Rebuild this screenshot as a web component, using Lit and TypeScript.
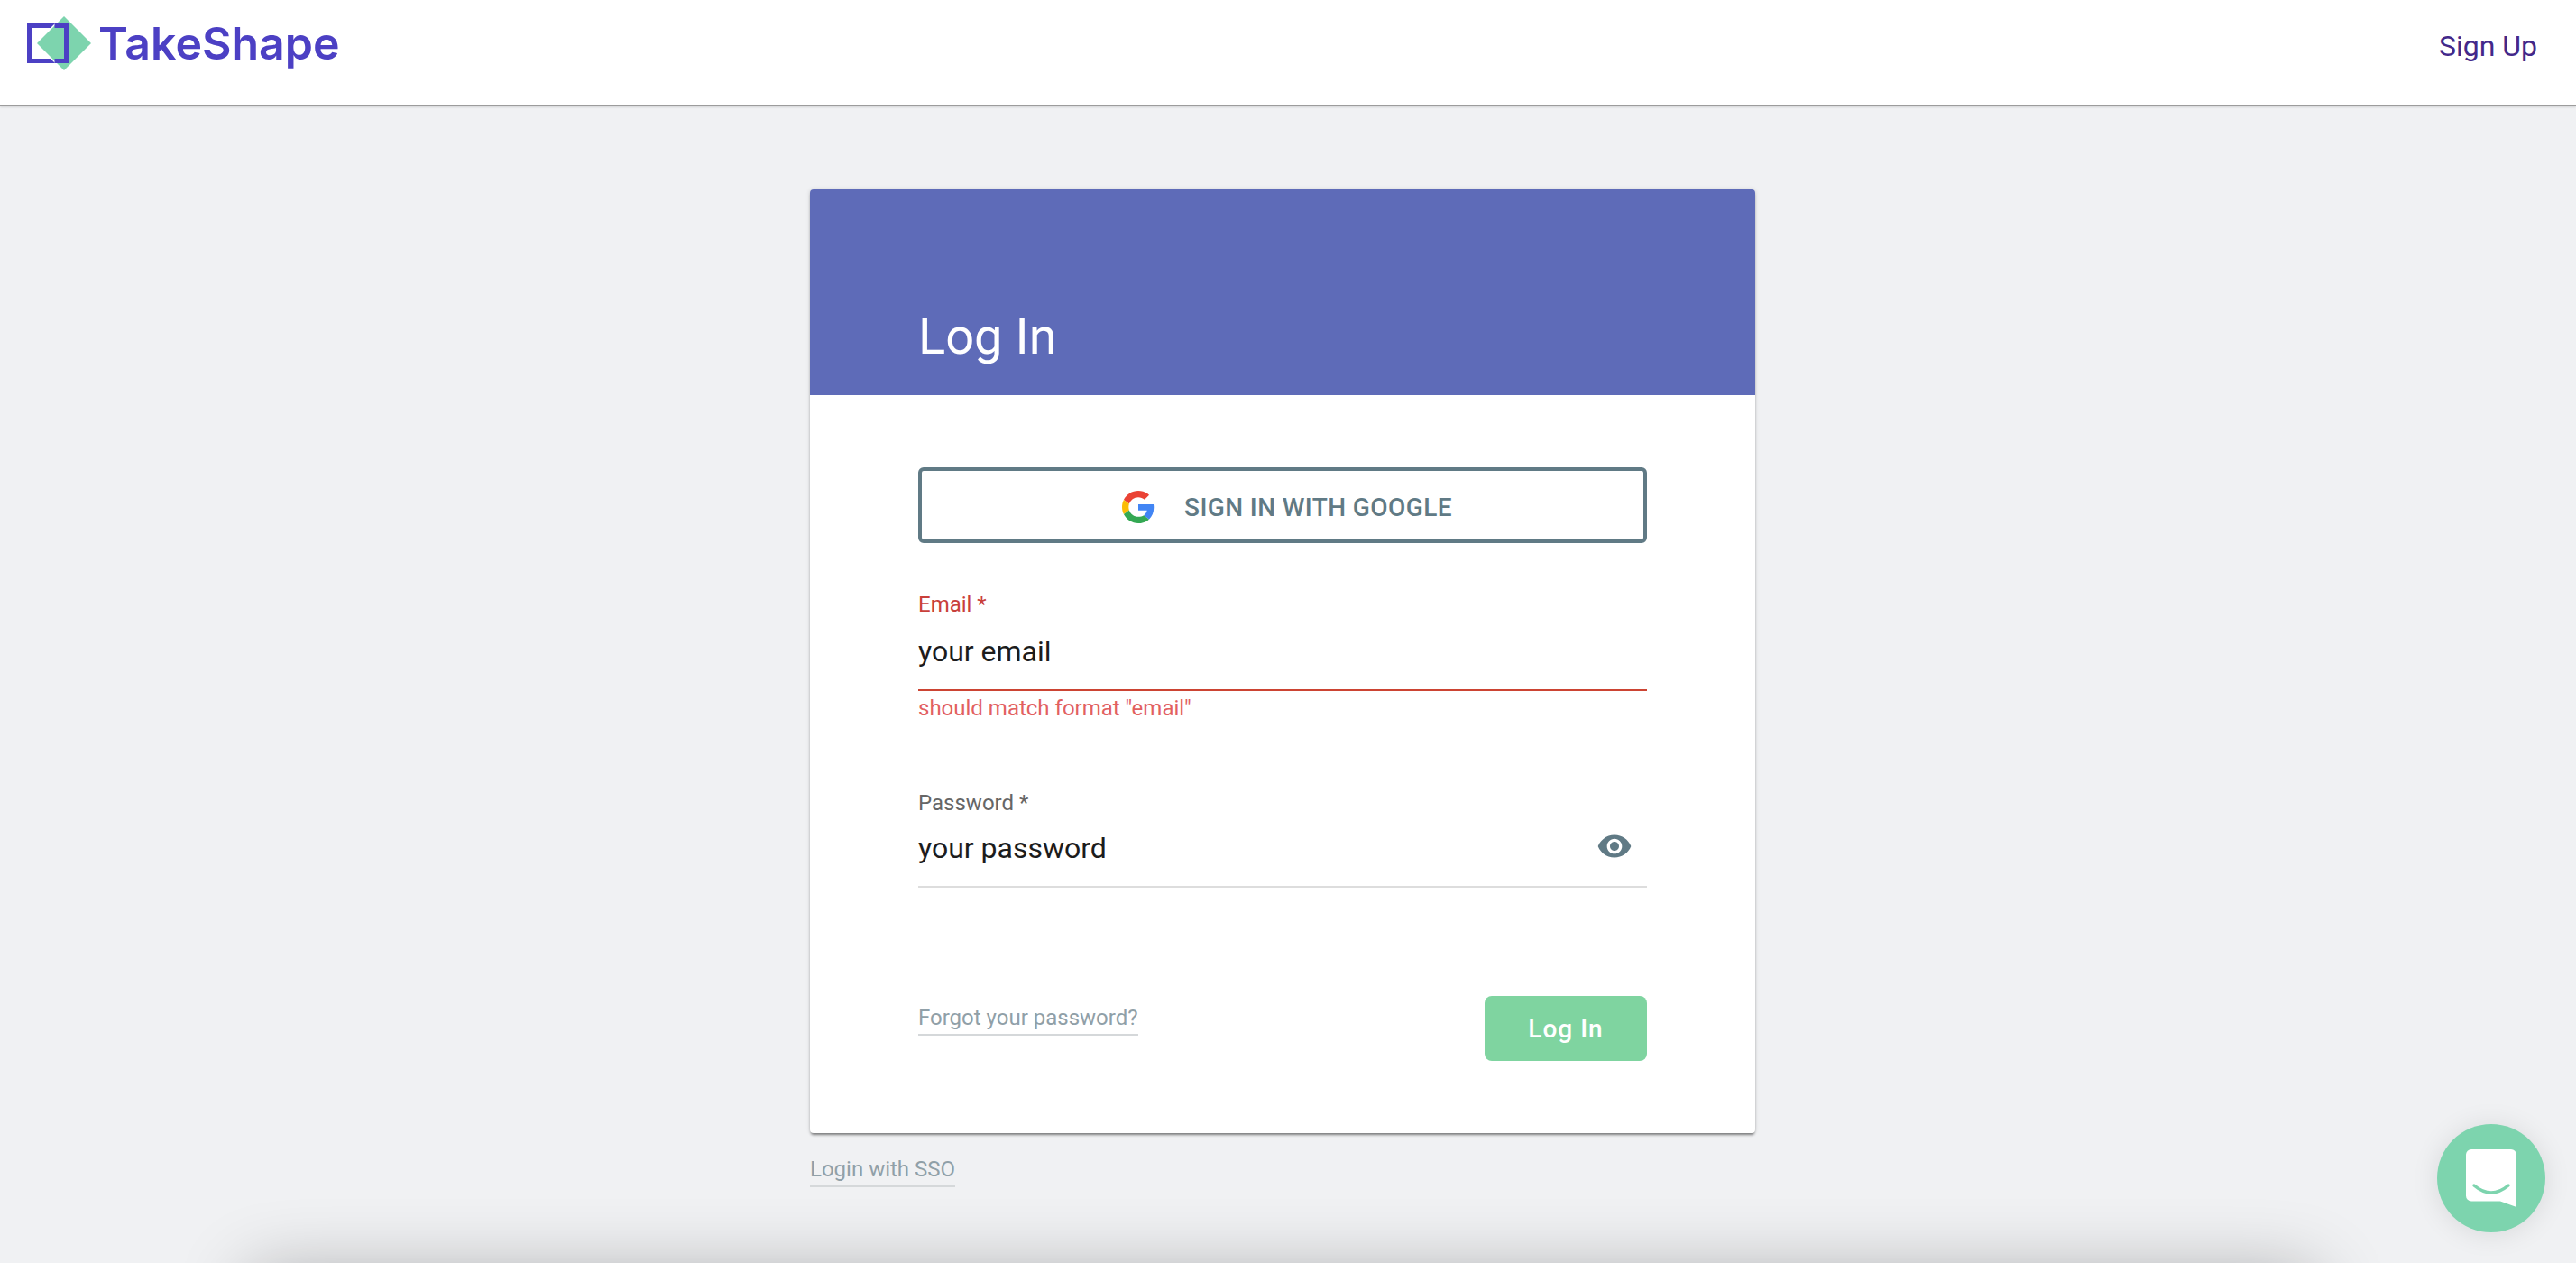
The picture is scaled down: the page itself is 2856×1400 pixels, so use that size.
import { LitElement, html, css } from "lit";
import { customElement } from "lit/decorators.js";

@customElement("app-root")
export class AppRoot extends LitElement {
  static styles = css`
    :host { display: block; font-family: Roboto, "Liberation Sans", sans-serif; }
    * { box-sizing: border-box; }
    .page { height: 1400px; background: #f0f1f3; overflow: hidden; display: flex; flex-direction: column; }
    header { flex: none; height: 118px; background: #fff; border-bottom: 2px solid #9c9c9c; box-shadow: 0 1px 2px rgba(0,0,0,.12); display: flex; justify-content: space-between; padding: 0 43px 0 30px; }
    .brand { display: flex; align-items: flex-start; padding-top: 18px; gap: 8px; }
    .brand svg { display: block; width: 71px; height: 60px; }
    .wordmark { font-family: Inter, sans-serif; font-weight: 600; font-size: 50px; line-height: 60px; color: #4c40c4; }
    .signup { font-size: 32px; line-height: 40px; margin-top: 31px; color: #43288a; }
    main { flex: none; width: 1048px; margin: 92px 0 0 898px; }
    .card { background: #fff; border-radius: 4px; box-shadow: 0 3px 3px -1px rgba(0,0,0,.45), 0 0 5px rgba(0,0,0,.14); overflow: hidden; }
    .card-head { height: 228px; background: #5e6bb8; display: flex; align-items: flex-end; padding: 0 120px 33px; }
    h1 { margin: 0; color: #fff; font-weight: 400; font-size: 56px; line-height: 64px; }
    .card-body { padding: 80px 120px; }
    .google { height: 84px; border: 4px solid #607a85; border-radius: 6px; display: flex; align-items: center; justify-content: center; gap: 33px; padding: 4px 0 0 10px; color: #607a85; font-size: 28px; font-weight: 500; letter-spacing: .4px; }
    .google svg { width: 36px; height: 36px; display: block; }
    .label { font-size: 24px; line-height: 32px; color: #666; }
    .label.err { color: #c9403a; }
    .email { margin-top: 52px; }
    .password { margin-top: 73px; }
    .input { display: flex; justify-content: space-between; margin-top: 16px; padding-bottom: 22px; border-bottom: 2px solid #ddd; font-size: 32px; line-height: 40px; color: #1c1c1c; }
    .password .input { margin-top: 14px; }
    .input.err { border-bottom-color: #cc4433; }
    .eye { width: 40px; height: 40px; margin: -2px 16px 0 0; fill: #607a85; display: block; }
    .error { margin-top: 3px; font-size: 24px; line-height: 32px; color: #e2605f; }
    .actions { display: flex; justify-content: space-between; align-items: flex-start; margin-top: 120px; }
    .link { display: inline-block; font-size: 24px; line-height: 32px; color: #90a0a8; padding-bottom: 2px; border-bottom: 2px solid #d5d8da; }
    .actions .link { margin-top: 8px; }
    .submit { width: 180px; height: 72px; border-radius: 8px; background: #7fd4a0; color: #fff; font-size: 28px; font-weight: 500; letter-spacing: 1px; display: flex; align-items: center; justify-content: center; }
    .below { margin-top: 24px; }
    .offscreen { flex: none; width: 2290px; height: 400px; margin: 96px 0 0 277px; border-radius: 8px; box-shadow: 0 0 80px rgba(0,0,0,.3); }
    .chat { position: fixed; right: 34px; bottom: 34px; width: 120px; height: 120px; border-radius: 50%; background: #7dd4ae; box-shadow: 0 2px 30px rgba(0,0,0,.1); }
    .chat svg { display: block; width: 120px; height: 120px; }
  `;

  render() {
    return html`
      <div class="page">
        <header>
          <div class="brand">
            <svg viewBox="30 18 71 60">
              <rect x="32.5" y="28.5" width="41" height="39" fill="none" stroke="#4c40c4" stroke-width="5"></rect>
              <polygon points="71,16 103,48 71,80 39,48" fill="#fff"></polygon>
              <polygon points="71,18 101,48 71,78 41,48" fill="#7dd4ae"></polygon>
              <path d="M60.500 28.500H73.500V67.500H60.500" fill="none" stroke="#4c40c4" stroke-width="5"></path>
            </svg>
            <div class="wordmark">TakeShape</div>
          </div>
          <div class="signup">Sign Up</div>
        </header>
        <main>
          <div class="card">
            <div class="card-head"><h1>Log In</h1></div>
            <div class="card-body">
              <div class="google">
                <svg viewBox="0 0 48 48">
                  <path fill="#EA4335" d="M24 9.5c3.54 0 6.71 1.22 9.21 3.6l6.85-6.85C35.9 2.38 30.47 0 24 0 14.62 0 6.51 5.38 2.56 13.22l7.98 6.19C12.43 13.72 17.74 9.5 24 9.5z"></path>
                  <path fill="#4285F4" d="M46.98 24.55c0-1.57-.15-3.09-.38-4.55H24v9.02h12.94c-.58 2.96-2.26 5.48-4.78 7.18l7.73 6c4.51-4.18 7.09-10.36 7.09-17.65z"></path>
                  <path fill="#FBBC05" d="M10.53 28.59c-.48-1.45-.76-2.99-.76-4.59s.27-3.14.76-4.59l-7.98-6.19C.92 16.46 0 20.12 0 24c0 3.88.92 7.54 2.56 10.78l7.97-6.19z"></path>
                  <path fill="#34A853" d="M24 48c6.48 0 11.93-2.13 15.89-5.81l-7.73-6c-2.15 1.45-4.92 2.3-8.16 2.3-6.26 0-11.57-4.22-13.47-9.91l-7.98 6.19C6.51 42.62 14.62 48 24 48z"></path>
                </svg>
                <span>SIGN IN WITH GOOGLE</span>
              </div>
              <div class="email">
                <div class="label err">Email *</div>
                <div class="input err"><span>your email</span></div>
                <div class="error">should match format "email"</div>
              </div>
              <div class="password">
                <div class="label">Password *</div>
                <div class="input">
                  <span>your password</span>
                  <svg class="eye" viewBox="0 0 24 24"><path d="M12 4.5C7 4.5 2.730 7.610 1 12c1.730 4.390 6 7.500 11 7.500s9.270-3.110 11-7.500c-1.730-4.390-6-7.500-11-7.500zM12 17c-2.760 0-5-2.240-5-5s2.240-5 5-5 5 2.240 5 5-2.240 5-5 5zm0-8c-1.660 0-3 1.340-3 3s1.340 3 3 3 3-1.340 3-3-1.340-3-3-3z"></path></svg>
                </div>
              </div>
              <div class="actions">
                <span class="link">Forgot your password?</span>
                <div class="submit">Log In</div>
              </div>
            </div>
          </div>
          <div class="below"><span class="link">Login with SSO</span></div>
        </main>
        <div class="offscreen"></div>
      </div>
      <div class="chat">
        <svg viewBox="0 0 120 120">
          <path fill="#fff" d="M38 28H82a6 6 0 0 1 6 6V92L70 85.500H38a6 6 0 0 1-6-6V34a6 6 0 0 1 6-6z"></path>
          <path fill="none" stroke="#7dd4ae" stroke-width="3.500" stroke-linecap="round" d="M41 68Q60 84 79 68"></path>
        </svg>
      </div>
    `;
  }
}
